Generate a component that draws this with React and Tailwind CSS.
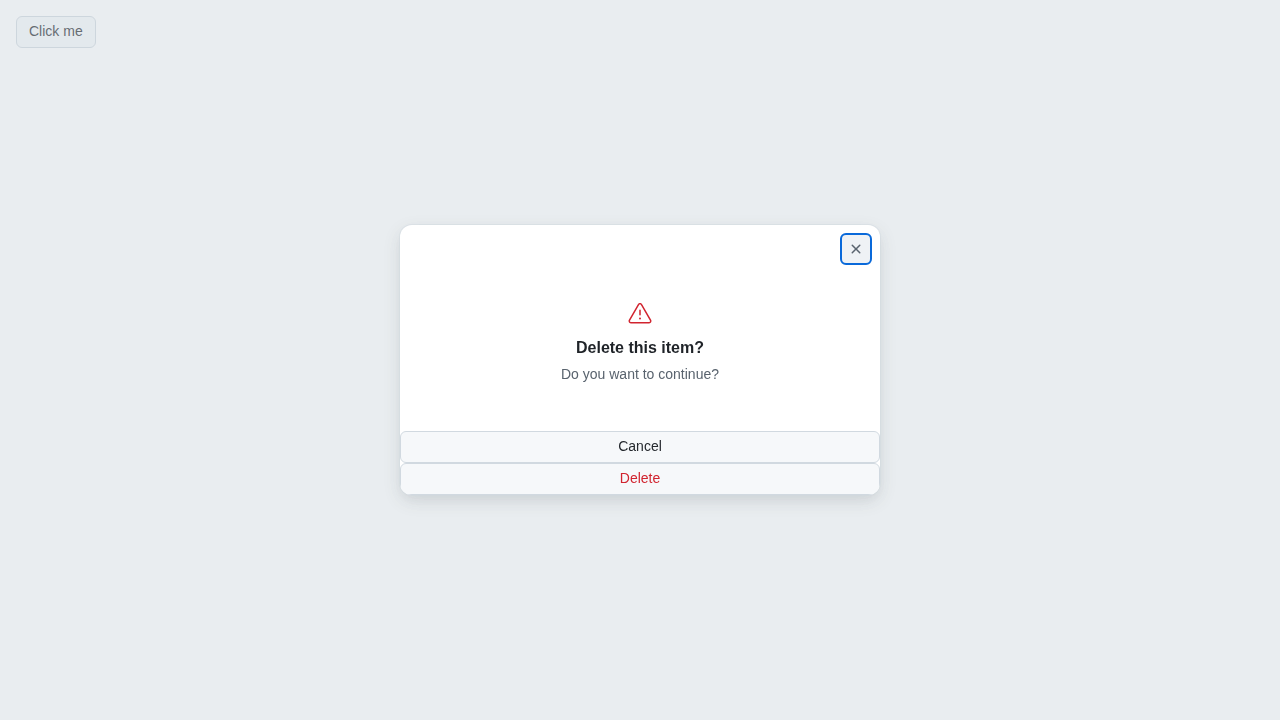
function AlertIcon() {
  return (
    <svg className="size-6 fill-[#d1242f]" viewBox="0 0 24 24" aria-hidden="true">
      <path d="M13 17.5a1 1 0 1 1-2 0 1 1 0 0 1 2 0Zm-.25-8.25a.75.75 0 0 0-1.5 0v4.5a.75.75 0 0 0 1.5 0v-4.5Z" />
      <path d="M9.836 3.244c.963-1.665 3.365-1.665 4.328 0l8.967 15.504c.963 1.667-.24 3.752-2.165 3.752H3.034c-1.926 0-3.128-2.085-2.165-3.752Zm3.03.751a1.002 1.002 0 0 0-1.732 0L2.168 19.499A1.002 1.002 0 0 0 3.034 21h17.932a1.002 1.002 0 0 0 .866-1.5L12.866 3.994Z" />
    </svg>
  );
}

function CloseIcon() {
  return (
    <svg className="size-4 fill-current" viewBox="0 0 16 16" aria-hidden="true">
      <path d="M3.72 3.72a.75.75 0 0 1 1.06 0L8 6.94l3.22-3.22a.749.749 0 0 1 1.275.326.749.749 0 0 1-.215.734L9.06 8l3.22 3.22a.749.749 0 0 1-.326 1.275.749.749 0 0 1-.734-.215L8 9.06l-3.22 3.22a.751.751 0 0 1-1.042-.018.751.751 0 0 1-.018-1.042L6.94 8 3.72 4.78a.75.75 0 0 1 0-1.06Z" />
    </svg>
  );
}

const buttonBase =
  "h-8 rounded-md border border-[#d1d9e0] bg-[#f6f8fa] px-3 pb-0.5 text-sm leading-5 flex items-center justify-center";

export default function App() {
  return (
    <div className="min-h-screen bg-white p-4 font-['Liberation_Sans',Arial,sans-serif]">
      <button type="button" className={`${buttonBase} text-[#25292e]`}>
        Click me
      </button>

      <div className="fixed inset-0 flex items-center justify-center bg-[#c8d1da]/40 p-4">
        <div
          role="alertdialog"
          aria-modal="true"
          aria-labelledby="dialog-title"
          aria-describedby="dialog-description"
          className="flex w-full max-w-[480px] flex-col overflow-hidden rounded-xl bg-white shadow-[0_0_0_1px_#d1d9e080,0_6px_12px_-3px_#25292e0a,0_6px_18px_0_#25292e1f]"
        >
          <div className="flex justify-end px-2 pt-2">
            <button
              type="button"
              aria-label="Close"
              className="flex size-8 items-center justify-center rounded-md bg-[#eff2f5] text-[#59636e] outline-2 -outline-offset-2 outline-[#0969da]"
            >
              <CloseIcon />
            </button>
          </div>
          <div className="flex flex-col items-center px-6 pt-9 pb-[47px] text-center">
            <AlertIcon />
            <h1 id="dialog-title" className="mt-[11px] text-base leading-6 font-bold text-[#1f2328]">
              Delete this item?
            </h1>
            <p id="dialog-description" className="mt-1 text-sm leading-5 text-[#59636e]">
              Do you want to continue?
            </p>
          </div>
          <button type="button" className={`${buttonBase} text-[#25292e]`}>
            Cancel
          </button>
          <button type="button" className={`${buttonBase} text-[#d1242f]`}>
            Delete
          </button>
        </div>
      </div>
    </div>
  );
}
